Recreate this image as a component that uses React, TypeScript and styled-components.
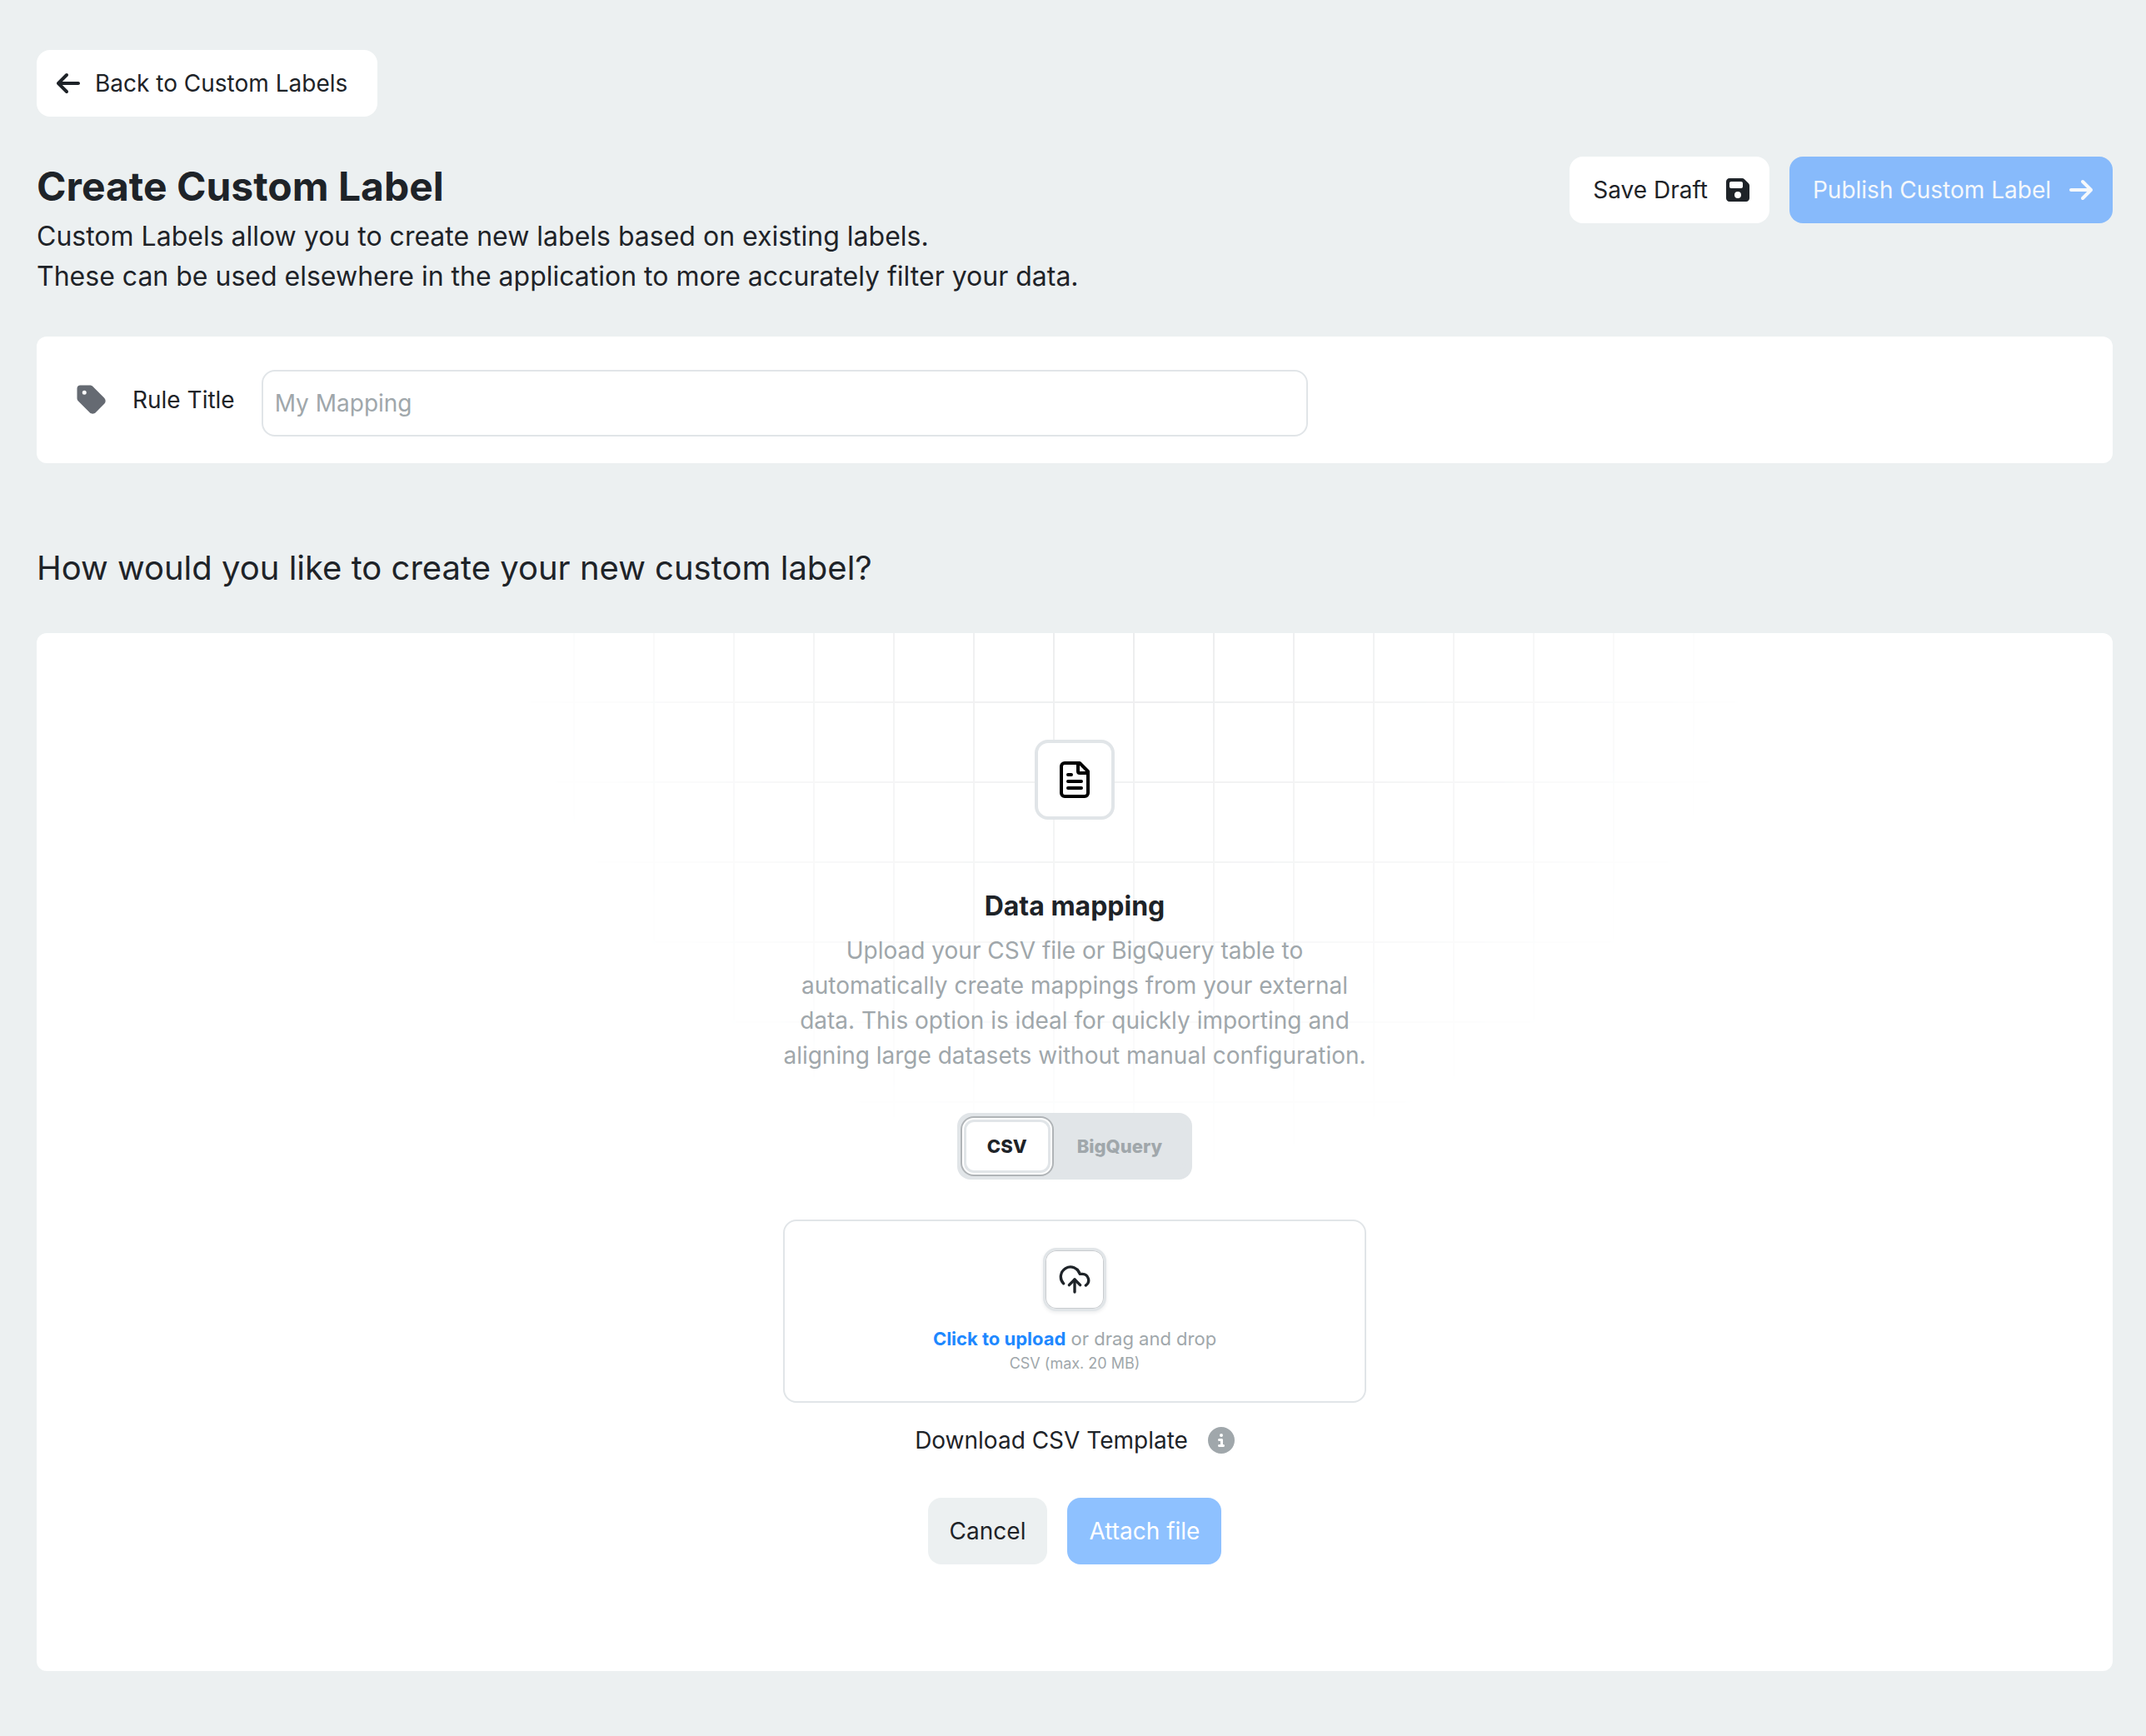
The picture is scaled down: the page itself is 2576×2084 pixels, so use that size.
import React, { useState } from "react";
import styled, { createGlobalStyle, css } from "styled-components";
import { FaArrowLeft, FaArrowRight, FaCircleInfo, FaFloppyDisk, FaTag } from "react-icons/fa6";

const colors = {
  page: "#ecf0f1",
  surface: "#ffffff",
  ink: "#1e2328",
  muted: "#a0a7ab",
  border: "#e1e5e8",
  icon: "#656a72",
  link: "#1e88ff",
  primarySoft: "#8ec1ff",
  publish: "#87bafb",
};

const GlobalStyle = createGlobalStyle`
  *, *::before, *::after { box-sizing: border-box; }
  body {
    margin: 0;
    background: ${colors.page};
    color: ${colors.ink};
    font-family: Inter, "Liberation Sans", sans-serif;
    font-size: 28px;
    line-height: 42px;
  }
  button, input { font: inherit; color: inherit; }
  h1, h2, h3, p { margin: 0; }
`;

const Page = styled.main`
  display: flex;
  flex-direction: column;
  gap: 48px;
  padding: 60px 40px 78px 44px;
`;

type Tone = "plain" | "subtle" | "primary" | "publish";

const tones = {
  plain: css`background: ${colors.surface};`,
  subtle: css`background: ${colors.page};`,
  primary: css`background: ${colors.primarySoft}; color: #fff;`,
  publish: css`background: ${colors.publish}; color: #f5f8fb;`,
};

const Button = styled.button<{ $tone: Tone; $withIcon?: boolean }>`
  display: inline-flex;
  align-items: center;
  gap: 20px;
  height: 80px;
  padding: ${({ $withIcon }) => ($withIcon ? "0 22px 0 28px" : "0 26px")};
  border: 0;
  border-radius: 16px;
  white-space: nowrap;
  cursor: pointer;
  ${({ $tone }) => tones[$tone]}
`;

const BackLink = styled.a`
  display: inline-flex;
  align-items: center;
  align-self: flex-start;
  gap: 16px;
  height: 80px;
  padding: 0 36px 0 22px;
  border-radius: 16px;
  background: ${colors.surface};
  color: inherit;
  text-decoration: none;
`;

const Header = styled.header`
  display: flex;
  justify-content: space-between;
  align-items: flex-start;
  gap: 24px;
`;

const Title = styled.h1`
  font-size: 48px;
  line-height: 72px;
  font-weight: 700;
`;

const Lead = styled.p`
  font-size: 32px;
  line-height: 48px;
`;

const Actions = styled.div`
  display: flex;
  gap: 24px;
`;

const RuleCard = styled.section`
  display: flex;
  align-items: center;
  height: 152px;
  padding: 0 46px;
  border-radius: 12px;
  background: ${colors.surface};
`;

const RuleLabel = styled.label`
  display: flex;
  align-items: center;
  gap: 29px;
  margin-right: 32px;
  white-space: nowrap;

  svg { color: ${colors.icon}; }
`;

const TextField = styled.input`
  flex: 0 1 1256px;
  min-width: 0;
  height: 80px;
  margin-top: 8px;
  padding: 0 14px;
  border: 2px solid ${colors.border};
  border-radius: 16px;
  background: ${colors.surface};
  outline: none;

  &::placeholder { color: ${colors.muted}; opacity: 1; }
`;

const Question = styled.h2`
  margin-top: 48px;
  font-size: 40px;
  line-height: 60px;
  font-weight: 400;
`;

const MappingCard = styled.section`
  position: relative;
  display: flex;
  flex-direction: column;
  align-items: center;
  padding: 128px 24px;
  border-radius: 12px;
  background: ${colors.surface};

  &::before {
    content: "";
    position: absolute;
    inset: 0;
    background-image:
      linear-gradient(to right, #e9eaeb 2px, transparent 2px),
      linear-gradient(to bottom, #e9eaeb 2px, transparent 2px);
    background-size: 96px 96px;
    background-position: calc(50% + 22px) -14px;
    mask-image: radial-gradient(circle 768px at calc(50% + 70px) -110px, #000, transparent);
  }

  > * { position: relative; }
`;

const FileBadge = styled.div`
  display: grid;
  place-items: center;
  width: 96px;
  height: 96px;
  border: 4px solid ${colors.border};
  border-radius: 16px;
  background: ${colors.surface};
  color: #000;
`;

const MappingTitle = styled.h3`
  margin-top: 80px;
  font-size: 32px;
  line-height: 48px;
  font-weight: 700;
`;

const Description = styled.p`
  max-width: 712px;
  margin-top: 8px;
  color: ${colors.muted};
  text-align: center;
`;

const Toggle = styled.div`
  display: flex;
  gap: 4px;
  margin-top: 48px;
  padding: 8px;
  border-radius: 16px;
  background: ${colors.border};
`;

const ToggleOption = styled.button<{ $active: boolean }>`
  height: 64px;
  padding: 0 25px;
  border: 3px solid ${colors.border};
  border-radius: 12px;
  background: ${({ $active }) => ($active ? colors.surface : "transparent")};
  box-shadow: ${({ $active }) => ($active ? "0 0 0 2px #fff, 0 0 0 4px #b0b4b7" : "none")};
  color: ${({ $active }) => ($active ? colors.ink : colors.muted)};
  font-size: 22px;
  line-height: 34px;
  font-weight: 800;
  cursor: pointer;
`;

const DropZone = styled.div`
  display: flex;
  flex-direction: column;
  align-items: center;
  width: 700px;
  max-width: 100%;
  margin-top: 48px;
  padding: 32px;
  border: 2px solid ${colors.border};
  border-radius: 16px;
  background: ${colors.surface};
`;

const UploadBadge = styled.div`
  display: grid;
  place-items: center;
  width: 76px;
  height: 76px;
  margin-bottom: 16px;
  border: 3px solid ${colors.border};
  border-radius: 16px;
  background: ${colors.surface};
  box-shadow: inset 0 0 0 1px #c9cccf, 0 2px 4px rgba(16, 24, 40, 0.08);
`;

const UploadText = styled.p`
  color: ${colors.muted};
  font-size: 22px;
  line-height: 34px;
`;

const UploadLink = styled.button`
  padding: 0;
  border: 0;
  background: none;
  color: ${colors.link};
  font-weight: 700;
  cursor: pointer;
`;

const UploadHint = styled.p`
  color: ${colors.muted};
  font-size: 18px;
  line-height: 26px;
`;

const TemplateRow = styled.div`
  display: flex;
  align-items: center;
  gap: 24px;
  margin-top: 24px;

  svg { color: ${colors.muted}; }
`;

const TemplateLink = styled.a`
  color: inherit;
  text-decoration: none;
`;

const FooterActions = styled(Actions)`
  margin-top: 48px;
`;

const FileIcon = () => (
  <svg width="48" height="48" viewBox="0 0 24 24" fill="none" stroke="currentColor" strokeWidth="2" strokeLinecap="round" strokeLinejoin="round" aria-hidden="true">
    <path d="M15 2H6a2 2 0 0 0-2 2v16a2 2 0 0 0 2 2h12a2 2 0 0 0 2-2V7Z" />
    <path d="M14 2v5a1 1 0 0 0 1 1h5" />
    <path d="M10 9H8M16 13H8M16 17H8" />
  </svg>
);

const CloudIcon = () => (
  <svg width="40" height="40" viewBox="0 0 24 24" fill="none" stroke="currentColor" strokeWidth="2" strokeLinecap="round" strokeLinejoin="round" aria-hidden="true">
    <path d="M4 14.899A7 7 0 1 1 15.71 8h1.79a4.5 4.5 0 0 1 2.5 8.242" />
    <path d="M12 12v9" />
    <path d="m16 16-4-4-4 4" />
  </svg>
);

const sources = ["CSV", "BigQuery"];

export default function App() {
  const [source, setSource] = useState("CSV");

  return (
    <>
      <GlobalStyle />
      <Page>
        <BackLink href="#labels">
          <FaArrowLeft size={32} />
          Back to Custom Labels
        </BackLink>

        <Header>
          <div>
            <Title>Create Custom Label</Title>
            <Lead>
              Custom Labels allow you to create new labels based on existing labels.
              <br />
              These can be used elsewhere in the application to more accurately filter your data.
            </Lead>
          </div>
          <Actions>
            <Button type="button" $tone="plain" $withIcon>
              Save Draft
              <FaFloppyDisk size={32} />
            </Button>
            <Button type="button" $tone="publish" $withIcon>
              Publish Custom Label
              <FaArrowRight size={32} />
            </Button>
          </Actions>
        </Header>

        <RuleCard>
          <RuleLabel htmlFor="rule-title">
            <FaTag size={40} />
            Rule Title
          </RuleLabel>
          <TextField id="rule-title" type="text" placeholder="My Mapping" />
        </RuleCard>

        <Question>How would you like to create your new custom label?</Question>

        <MappingCard>
          <FileBadge>
            <FileIcon />
          </FileBadge>
          <MappingTitle>Data mapping</MappingTitle>
          <Description>
            Upload your CSV file or BigQuery table to automatically create mappings from your external data. This option
            is ideal for quickly importing and aligning large datasets without manual configuration.
          </Description>

          <Toggle role="group" aria-label="Data source">
            {sources.map((name) => (
              <ToggleOption
                key={name}
                type="button"
                aria-pressed={source === name}
                $active={source === name}
                onClick={() => setSource(name)}
              >
                {name}
              </ToggleOption>
            ))}
          </Toggle>

          <DropZone>
            <UploadBadge>
              <CloudIcon />
            </UploadBadge>
            <UploadText>
              <UploadLink type="button">Click to upload</UploadLink> or drag and drop
            </UploadText>
            <UploadHint>CSV (max. 20 MB)</UploadHint>
          </DropZone>

          <TemplateRow>
            <TemplateLink href="#template">Download CSV Template</TemplateLink>
            <FaCircleInfo size={32} />
          </TemplateRow>

          <FooterActions>
            <Button type="button" $tone="subtle">Cancel</Button>
            <Button type="button" $tone="primary">Attach file</Button>
          </FooterActions>
        </MappingCard>
      </Page>
    </>
  );
}
